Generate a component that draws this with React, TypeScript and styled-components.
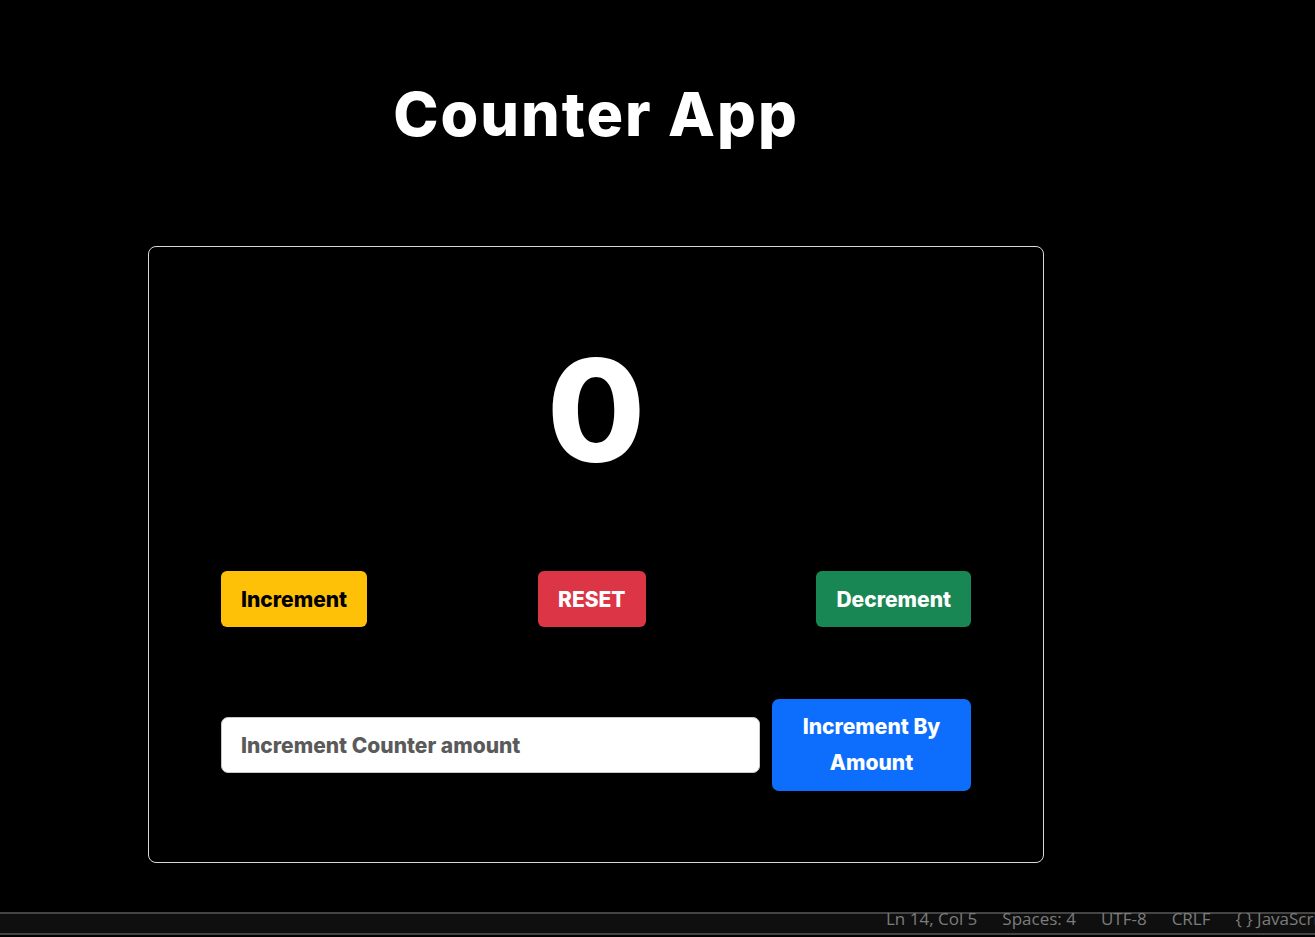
import React from "react";
import styled, { createGlobalStyle } from "styled-components";

const Global = createGlobalStyle`
  html, body { margin: 0; padding: 0; background: #000; }
  body { font-family: Inter, "Liberation Sans", sans-serif; }
  * { box-sizing: border-box; }
`;

const Page = styled.div`
  width: 1315px;
  height: 937px;
  background: #000;
  display: flex;
  flex-direction: column;
  overflow: hidden;
`;

const Main = styled.main`
  flex: 1;
  padding-left: 148px;
`;

const Container = styled.div`
  width: 896px;
  display: flex;
  flex-direction: column;
`;

const Title = styled.h1`
  margin: 77px 0 0;
  font-family: Inter, sans-serif;
  font-weight: 800;
  font-size: 61px;
  line-height: 74px;
  color: #fff;
  text-align: center;
  letter-spacing: 2px;
`;

const Card = styled.section`
  margin-top: 95px;
  height: 617px;
  border: 1px solid #d9d9d9;
  border-radius: 8px;
  padding: 72px;
  display: flex;
  flex-direction: column;
`;

const Count = styled.div`
  margin-top: 4px;
  font-family: Inter, sans-serif;
  font-weight: 800;
  font-size: 142px;
  line-height: 174px;
  color: #fff;
  text-align: center;
`;

const ButtonRow = styled.div`
  margin-top: 74px;
  display: flex;
  justify-content: space-between;
  align-items: center;
`;

const Button = styled.button<{ $bg: string; $fg: string }>`
  height: 56px;
  padding: 0 20px;
  border: none;
  border-radius: 6px;
  background: ${(p) => p.$bg};
  color: ${(p) => p.$fg};
  font-family: Inter, sans-serif;
  font-weight: 800;
  font-size: 21px;
  cursor: pointer;
`;

const AmountRow = styled.div`
  margin-top: 72px;
  display: flex;
  align-items: center;
  gap: 12px;
`;

const AmountInput = styled.input`
  flex: 1;
  height: 56px;
  border: 1px solid #c8c8c8;
  border-radius: 7px;
  background: #fff;
  padding: 0 19px;
  font-family: Inter, sans-serif;
  font-weight: 800;
  font-size: 21px;
  color: #333;
  outline: none;
  &::placeholder { color: #5a5a5a; }
`;

const AmountButton = styled(Button)`
  width: 199px;
  height: 92px;
  line-height: 36px;
  padding: 10px 20px;
  border-radius: 7px;
`;

const StatusBar = styled.footer`
  height: 23px;
  margin-bottom: 2px;
  border-top: 2px solid #444;
  border-bottom: 2px solid #444;
  background: #0f0f0f;
  display: flex;
  align-items: flex-start;
  padding-left: 886px;
  gap: 25px;
  font-family: "Open Sans", "Noto Sans", sans-serif;
  font-size: 17px;
  line-height: 17px;
  color: #7c7c7c;
  white-space: nowrap;
`;

const StatusItem = styled.span`
  margin-top: -4px;
  flex-shrink: 0;
`;

export default function App() {
  return (
    <Page>
      <Global />
      <Main>
        <Container>
          <Title>Counter App</Title>
          <Card>
            <Count>0</Count>
            <ButtonRow>
              <Button $bg="#ffc107" $fg="#000">Increment</Button>
              <Button $bg="#dc3545" $fg="#fff">RESET</Button>
              <Button $bg="#198754" $fg="#fff">Decrement</Button>
            </ButtonRow>
            <AmountRow>
              <AmountInput placeholder="Increment Counter amount" />
              <AmountButton $bg="#0d6efd" $fg="#fff">Increment By Amount</AmountButton>
            </AmountRow>
          </Card>
        </Container>
      </Main>
      <StatusBar>
        <StatusItem>Ln 14, Col 5</StatusItem>
        <StatusItem>Spaces: 4</StatusItem>
        <StatusItem>UTF-8</StatusItem>
        <StatusItem>CRLF</StatusItem>
        <StatusItem>{"{ }"} JavaScript</StatusItem>
      </StatusBar>
    </Page>
  );
}
